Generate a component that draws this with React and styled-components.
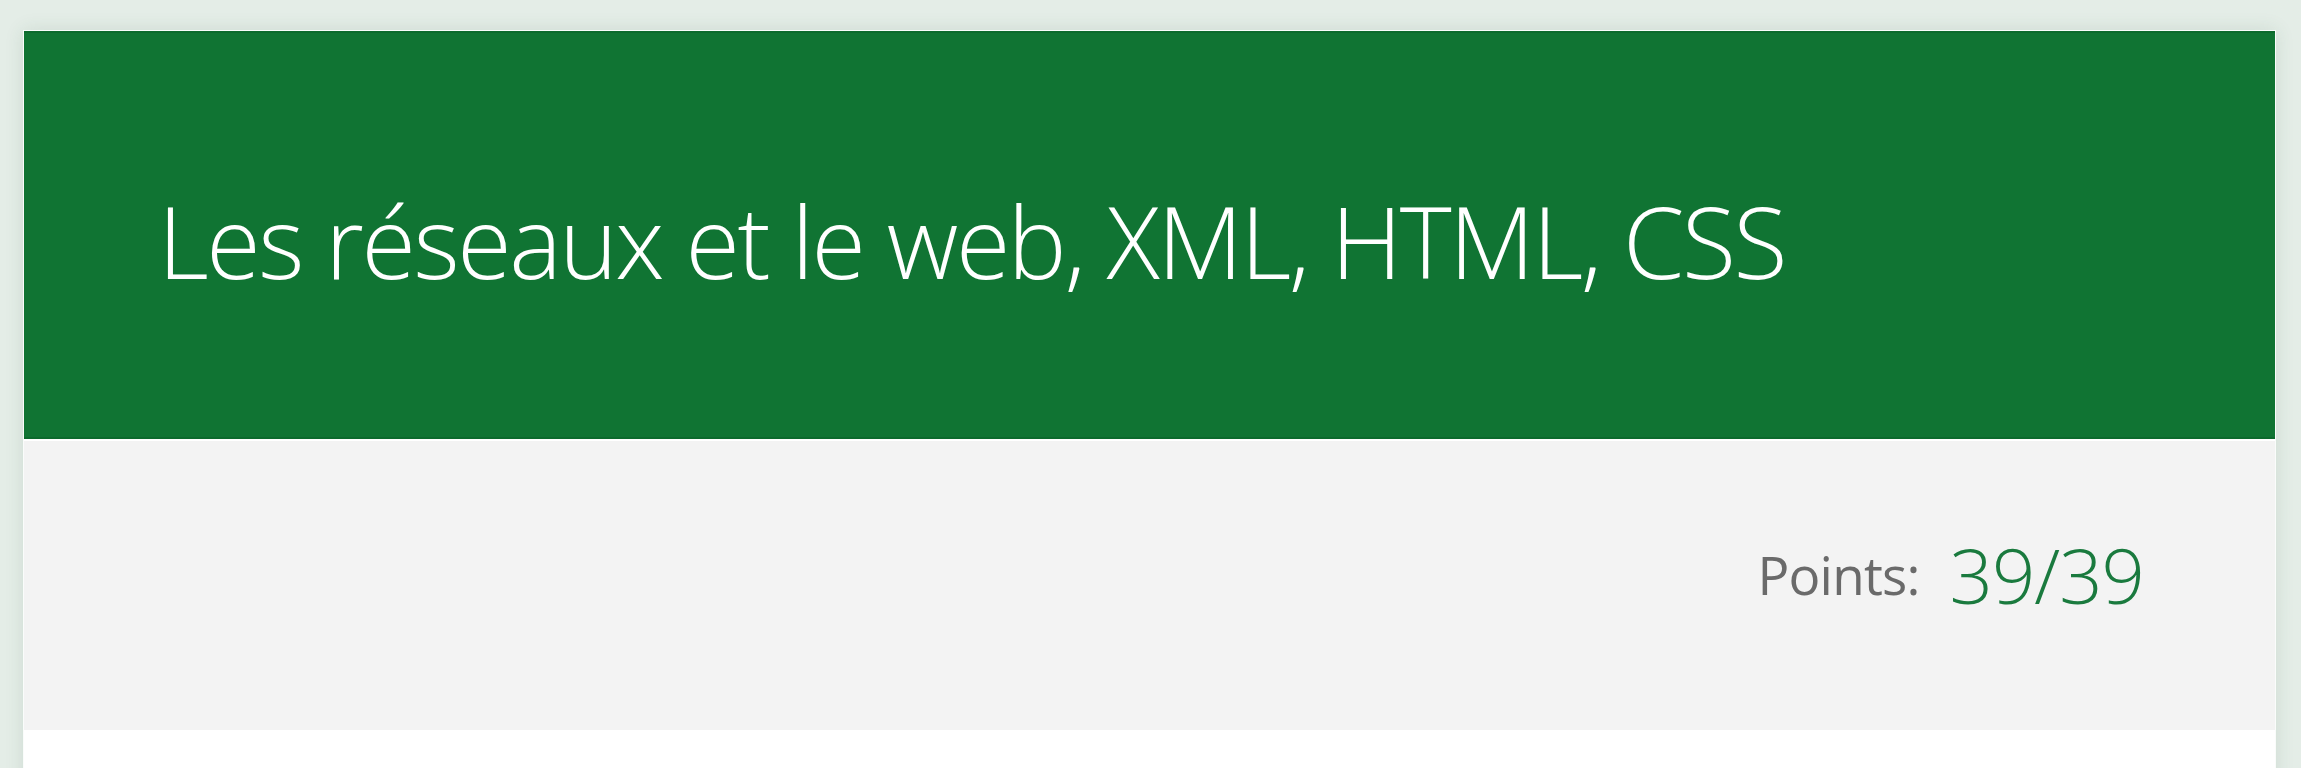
import React from 'react'
import styled, { createGlobalStyle } from 'styled-components'

const GlobalStyle = createGlobalStyle`
  html, body {
    margin: 0;
    padding: 0;
    background: #e4ede7;
  }
  body {
    font-family: "Open Sans", "Segoe UI", "Liberation Sans", sans-serif;
  }
`

export default function App() {
  return (
    <>
      <GlobalStyle />
      <Page>
        <Card>
          <Header>
            <Title>Les réseaux et le web, XML, HTML, CSS</Title>
          </Header>
          <ScoreBar>
            <Label>Points:</Label>
            <Score>39/39</Score>
          </ScoreBar>
          <Body />
        </Card>
      </Page>
    </>
  )
}

const Page = styled.div`
  height: 768px;
  overflow: hidden;
  padding: 30px 25px 0 23px;
  box-sizing: border-box;
`

const Card = styled.div`
  background: #ffffff;
  border: 1px solid #fafcfb;
  box-shadow: 0 0 18px rgba(40, 90, 60, 0.12);
  display: flex;
  flex-direction: column;
  height: 800px;
`

const Header = styled.div`
  background: #107433;
  border-top: 2px solid #0c6a2d;
  border-bottom: 2px solid #0c6a2d;
  height: 408px;
  flex-shrink: 0;
  display: flex;
  align-items: center;
  padding: 10px 0 0 134px;
  box-sizing: border-box;
`

const Title = styled.h1`
  margin: 0;
  color: #ffffff;
  font-weight: 300;
  font-size: 99px;
  letter-spacing: -2.4px;
  line-height: 1;
`

const ScoreBar = styled.div`
  margin-top: 2px;
  background: #f3f3f3;
  height: 289px;
  flex-shrink: 0;
  display: flex;
  align-items: center;
  justify-content: flex-end;
  padding: 0 131px 22px 0;
  box-sizing: border-box;
  gap: 30px;
`

const Label = styled.span`
  color: #6a6a6a;
  font-weight: 400;
  font-size: 53px;
  letter-spacing: -0.8px;
`

const Score = styled.span`
  color: #1a7a3e;
  font-weight: 300;
  font-size: 76px;
  letter-spacing: -1px;
`

const Body = styled.div`
  flex: 1;
  background: #ffffff;
`
